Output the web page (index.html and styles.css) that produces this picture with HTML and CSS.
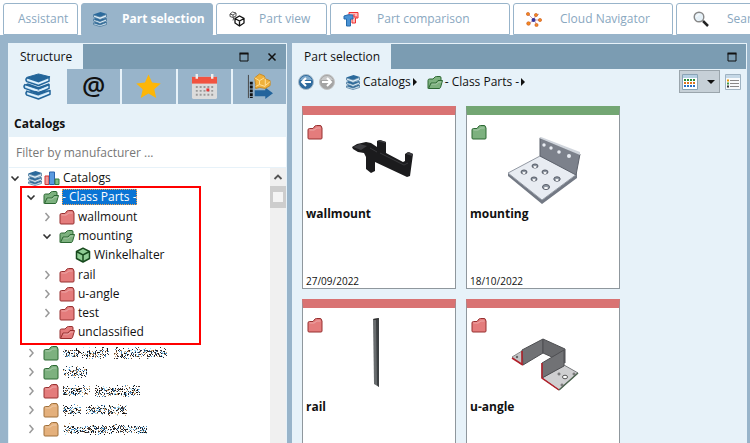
FILE: index.html
```
<!DOCTYPE html>
<html lang="en">
<head>
    <meta charset="UTF-8">
    <meta name="viewport" content="width=device-width, initial-scale=1.0">
    <title>Part selection</title>
    <link rel="stylesheet" href="styles.css">
</head>
<body>

    <!-- Icon library -->
    <svg class="icon-library" width="0" height="0" aria-hidden="true">
        <symbol id="books" viewBox="0 0 32 28">
            <path d="M5 4.500L17 1l12 3-12 5z" fill="#23659a" stroke="#23659a" stroke-linejoin="round"/>
            <path d="M5 5q-2 2 0 4l12 4 11-4.500V4.500L17 9zM3 12q-2 2 0 4l14 5 11-5v-4l-11 4.500zM5 19q-2 2 0 4l12 4 12-5v-4L17 22.500z" fill="#bfe0f5" stroke="#23659a" stroke-width="1.500" stroke-linejoin="round"/>
            <path d="M3 12l3-1.500 11 4 11-4v2L17 17zM5 19l-1-1 13 4.500 11-4.500" fill="#23659a"/>
            <path d="M6 7l11 4 10-4M4 14l13 5 10-4.500M6 21l11 4 11-4.500" fill="none" stroke="#eef8ff"/>
        </symbol>
        <symbol id="books-small" viewBox="0 0 16 16">
            <path d="M1 3.500L8.500 1 15 3 8 6zM1 8l3-1 4 1.500L14 7l1 1-7 3zM1 12l3-1 4 1.500 6-2 1 1-7 3z" fill="#2b6a9c"/>
            <path d="M1.500 4v2L8 8.500 14.500 6V3.500L8 6zM1.500 8.500v1.500L8 12.500 14.500 10V8L8 10.500zM1.500 12v1.500l6.500 2 6.500-2v-2L8 14z" fill="#dcecf6" stroke="#3b6d94" stroke-width=".7"/>
        </symbol>
        <symbol id="folder" viewBox="0 0 16 15">
            <path d="M1 13.500V5.500Q1 4 2.500 4H6l2-2.500Q8.500 1 9.500 1H13q1.500 0 1.500 1.500V3h.5v10.500q0 1-1 1H2q-1 0-1-1z" fill="var(--fill)" stroke="var(--line)"/>
            <path d="M2.500 5.500h5l2-2h4" fill="none" stroke="#fff" stroke-opacity=".35"/>
        </symbol>
        <symbol id="folder-open" viewBox="0 0 16 15">
            <path d="M1 14V6q0-1.500 1.500-1.500H6l2-2q.5-.5 1.500-.5H13q1 0 1 1.500V7" fill="var(--fill)" stroke="var(--line)"/>
            <path d="M1.500 14L4 8.500h5L11 6h4.500L13.500 13q-.5 1-1.500 1z" fill="var(--fill)" stroke="var(--line)" stroke-linejoin="round"/>
            <path d="M4.500 9.500h5l2-2h3" fill="none" stroke="#fff" stroke-opacity=".35"/>
        </symbol>
        <symbol id="chevron-down" viewBox="0 0 10 10"><path d="M1.500 3.500L5 7l3.500-3.500" fill="none" stroke="#333" stroke-width="1.600"/></symbol>
        <symbol id="chevron-right" viewBox="0 0 10 10"><path d="M3.500 1L7 5 3.500 9" fill="none" stroke="#999" stroke-width="1.500"/></symbol>
        <symbol id="chevron-up" viewBox="0 0 10 10"><path d="M1.500 7L5 3.500 8.500 7" fill="none" stroke="#555" stroke-width="1.800"/></symbol>
        <symbol id="maximize" viewBox="0 0 10 10"><path d="M1 1.500h8V9H1z" fill="none" stroke="#111"/><path d="M.5 1.500h9" stroke="#111" stroke-width="2"/></symbol>
        <symbol id="close" viewBox="0 0 10 10"><path d="M1.500 1.500l7 7m0-7l-7 7" stroke="#111" stroke-width="1.500"/></symbol>
    </svg>

    <nav class="main-tabs">
        <button class="tab tab-assistant">Assistant</button>
        <button class="tab tab-selection active"><svg class="icon"><use href="#books-small"/></svg>Part selection</button>
        <button class="tab tab-view">
            <svg class="icon" viewBox="0 0 16 16" fill="none" stroke="#111">
                <path d="M1 3l2.500-2L7 2v3L4 6.500 1 5.500zM1 3l3 1 3-2M4 4v2.500M5 5.500l-1 4" stroke="#555"/>
                <path d="M6 7.500L10.500 5 15 7.500v4.500L10.500 15 6 12zM6 7.500l4.500 2.500L15 7.500M10.500 10v5" stroke-width="1.300"/>
            </svg>Part view
        </button>
        <button class="tab tab-comparison">
            <svg class="icon" viewBox="0 0 16 16">
                <path d="M6 1.500h9V7h-2.500v5H9V7H6z" fill="#fbb" stroke="#e33"/>
                <path d="M1 5q4-2 9-1v4H7.500v7h-4V8H1z" fill="#4a92d4" stroke="#246bac"/>
                <path d="M11 3v3h3" stroke="#e33" fill="none"/>
            </svg>Part comparison
        </button>
        <button class="tab tab-cloud">
            <svg class="icon" viewBox="0 0 16 16">
                <path d="M8 9L2 3m6 6l2-6M8 9h6M8 9l-6 4m6-4l3 5M10 5l3-2" stroke="#c9a0b8" fill="none"/>
                <g fill="#f58a1f" stroke="#c8501a" stroke-width=".6"><circle cx="2" cy="3" r="1.600"/><circle cx="10" cy="4" r="1.600"/><circle cx="14" cy="9" r="1.600"/><circle cx="2.500" cy="12.500" r="1.800"/><circle cx="10.500" cy="14" r="1.600"/></g>
                <circle cx="7.500" cy="9" r="2" fill="#34349c"/>
            </svg>Cloud Navigator
        </button>
        <button class="tab tab-search">
            <svg class="icon" viewBox="0 0 16 16">
                <path d="M10 10l5 5" stroke="#222" stroke-width="2.500"/>
                <circle cx="6" cy="6" r="4.800" fill="#e6f1f8" stroke="#888" stroke-width="1.400"/>
                <path d="M3.500 6q.5-2.500 3-2.500" stroke="#fff" fill="none"/>
            </svg>Search
        </button>
    </nav>

    <main class="workspace">
        <!-- Structure panel -->
        <section class="panel structure">
            <header class="panel-header">
                <h2>Structure</h2>
                <button aria-label="Maximize"><svg><use href="#maximize"/></svg></button>
                <button aria-label="Close"><svg><use href="#close"/></svg></button>
            </header>

            <div class="mode-tabs">
                <button class="active" aria-label="Catalogs"><svg class="mode-icon"><use href="#books"/></svg></button>
                <button class="at" aria-label="Addresses">@</button>
                <button aria-label="Favorites">
                    <svg class="mode-icon" viewBox="0 0 28 28"><path d="M14 1.500l3.700 8.300 9 1-6.700 6 2 9L14 21.300 6 25.800l2-9-6.700-6 9-1z" fill="#fdb608"/></svg>
                </button>
                <button aria-label="History">
                    <svg class="mode-icon" viewBox="0 0 28 28">
                        <rect x="1" y="4" width="26" height="23" rx="1.500" fill="#dcdcdc"/>
                        <path d="M1 4h26v7H1z" fill="#f15340"/>
                        <path d="M6 1v5M22 1v5" stroke="#eee" stroke-width="2.500"/>
                        <path d="M5 14.500h19M5 18.500h19M5 22.500h19" stroke="#9a9a9a" stroke-width="2" stroke-dasharray="2 2"/>
                        <path d="M16 16h3v3h-3z" fill="#e33"/>
                    </svg>
                </button>
                <button aria-label="Sort">
                    <svg class="mode-icon" viewBox="0 0 28 28">
                        <path d="M2.500 2v24" stroke="#444"/>
                        <path d="M5.500 9v17" stroke="#111" stroke-width="3" stroke-dasharray="3 1"/>
                        <path d="M9 18h11v-3l8 6-8 6v-3H9z" fill="#23649c"/>
                        <path d="M9 5l5-4 5 2 1 3 5 2v5l-5 3-6-1-4 1V12z" fill="#efb13c" stroke="#c98a24"/>
                        <path d="M9 5l5 3 5-3m-5 3v4l6 2m-6-2l-4 2m10-8l0 7 5-4" fill="none" stroke="#ffe09a"/>
                    </svg>
                </button>
            </div>

            <h3 class="structure-title">Catalogs</h3>
            <input class="filter" type="text" placeholder="Filter by manufacturer ..." aria-label="Filter by manufacturer">

            <div class="tree-area">
                <ul class="tree">
                    <li>
                        <div class="node">
                            <svg class="arrow"><use href="#chevron-down"/></svg>
                            <svg class="icon"><use href="#books-small"/></svg>
                            <svg class="icon" viewBox="0 0 16 15"><path d="M1 5.500h4V14H1z" fill="#f09a9a" stroke="#c33"/><path d="M5.500 1.500h5V14h-5z" fill="#5b9ae0" stroke="#2b62ac"/><path d="M11 8.500h4V14h-4z" fill="#7fbf86" stroke="#387a40"/></svg>
                            <span class="label">Catalogs</span>
                        </div>
                        <ul>
                            <li class="marked">
                                <div class="node"><svg class="arrow"><use href="#chevron-down"/></svg><svg class="icon green"><use href="#folder-open"/></svg><span class="label selected">- Class Parts -</span></div>
                                <ul>
                                    <li><div class="node"><svg class="arrow"><use href="#chevron-right"/></svg><svg class="icon red"><use href="#folder"/></svg><span class="label">wallmount</span></div></li>
                                    <li>
                                        <div class="node"><svg class="arrow"><use href="#chevron-down"/></svg><svg class="icon green"><use href="#folder-open"/></svg><span class="label">mounting</span></div>
                                        <ul>
                                            <li>
                                                <div class="node leaf">
                                                    <svg class="icon" viewBox="0 0 16 16"><path d="M1.500 4.500L8 1.200l6.500 3.300v7L8 15l-6.500-3.500z" fill="#90cd95" stroke="#17491d" stroke-width="1.500" stroke-linejoin="round"/><path d="M1.500 4.500L8 8l6.500-3.500M8 8v7" fill="none" stroke="#17491d" stroke-width="1.500"/></svg>
                                                    <span class="label">Winkelhalter</span>
                                                </div>
                                            </li>
                                        </ul>
                                    </li>
                                    <li><div class="node"><svg class="arrow"><use href="#chevron-right"/></svg><svg class="icon red"><use href="#folder"/></svg><span class="label">rail</span></div></li>
                                    <li><div class="node"><svg class="arrow"><use href="#chevron-right"/></svg><svg class="icon red"><use href="#folder"/></svg><span class="label">u-angle</span></div></li>
                                    <li><div class="node"><svg class="arrow"><use href="#chevron-right"/></svg><svg class="icon red"><use href="#folder"/></svg><span class="label">test</span></div></li>
                                    <li><div class="node leaf"><svg class="icon red"><use href="#folder-open"/></svg><span class="label">unclassified</span></div></li>
                                </ul>
                            </li>
                            <!-- Names hidden on purpose, the script fills in the speckles -->
                            <li><div class="node"><svg class="arrow"><use href="#chevron-right"/></svg><svg class="icon green"><use href="#folder"/></svg><canvas class="hidden-name" width="104" height="12" data-gap="48"></canvas></div></li>
                            <li><div class="node"><svg class="arrow"><use href="#chevron-right"/></svg><svg class="icon green"><use href="#folder"/></svg><canvas class="hidden-name" width="24" height="12"></canvas></div></li>
                            <li><div class="node"><svg class="arrow"><use href="#chevron-right"/></svg><svg class="icon red"><use href="#folder"/></svg><canvas class="hidden-name" width="77" height="12" data-gap="29"></canvas></div></li>
                            <li><div class="node"><svg class="arrow"><use href="#chevron-right"/></svg><svg class="icon orange"><use href="#folder"/></svg><canvas class="hidden-name" width="64" height="12" data-gap="20"></canvas></div></li>
                            <li><div class="node"><svg class="arrow"><use href="#chevron-right"/></svg><svg class="icon orange"><use href="#folder"/></svg><canvas class="hidden-name" width="84" height="12"></canvas></div></li>
                        </ul>
                    </li>
                </ul>
                <div class="scrollbar">
                    <button aria-label="Scroll up"><svg><use href="#chevron-up"/></svg></button>
                    <div class="thumb"></div>
                </div>
            </div>
        </section>

        <!-- Part selection panel -->
        <section class="panel selection">
            <header class="panel-header">
                <h2>Part selection</h2>
                <button aria-label="Maximize"><svg><use href="#maximize"/></svg></button>
            </header>

            <div class="toolbar">
                <button class="nav-btn" aria-label="Back"><svg class="icon" viewBox="0 0 16 16"><circle cx="8" cy="8" r="7.500" fill="#2d6a9e" stroke="#a9bccb"/><path d="M2 6a6.500 6.500 0 0 1 12 0z" fill="#7fa9cb"/><path d="M13 8H4m4-4L4 8l4 4" fill="none" stroke="#fff" stroke-width="2"/></svg></button>
                <button class="nav-btn" aria-label="Forward"><svg class="icon" viewBox="0 0 16 16"><circle cx="8" cy="8" r="7.500" fill="#a4a4a4" stroke="#c4c4c4"/><path d="M2 6a6.500 6.500 0 0 1 12 0z" fill="#c8c8c8"/><path d="M3 8h9M8 4l4 4-4 4" fill="none" stroke="#fff" stroke-width="2"/></svg></button>
                <a class="crumb" href="#catalogs"><svg class="icon"><use href="#books-small"/></svg>Catalogs<i></i></a>
                <a class="crumb" href="#class-parts"><svg class="icon green"><use href="#folder-open"/></svg>- Class Parts -<i></i></a>
                <button class="view-btn" aria-label="Tile view">
                    <svg class="icon" viewBox="0 0 16 16">
                        <path d="M.5.500h15v15H.5z" fill="#fff" stroke="#8aa3b5"/><path d="M1 1h14v3H1z" fill="#b5cfe2"/>
                        <path d="M2 6h12" stroke="#2a8a3a" stroke-width="2" stroke-dasharray="2 1"/><path d="M2 9h12" stroke="#e0761e" stroke-width="2" stroke-dasharray="2 1"/><path d="M2 12h12" stroke="#2b6fc4" stroke-width="2" stroke-dasharray="2 1"/>
                    </svg>
                    <i></i>
                </button>
                <button class="list-btn" aria-label="List view">
                    <svg class="icon" viewBox="0 0 16 16">
                        <path d="M.5.500h15v15H.5z" fill="#f7fafc" stroke="#9fb3c2"/><path d="M1 1h14v3H1z" fill="#c5d8e6"/>
                        <path d="M5 6.500h9M5 9.500h9M5 12.500h9" stroke="#888"/><path d="M2 6.500h2" stroke="#e90" stroke-width="2"/><path d="M2 9.500h2" stroke="#494" stroke-width="2"/><path d="M2 12.500h2" stroke="#333" stroke-width="2"/>
                    </svg>
                </button>
            </div>

            <div class="card-grid">
                <article class="card red">
                    <svg class="icon"><use href="#folder"/></svg>
                    <svg class="preview" viewBox="0 0 152 90">
                        <path d="M49 31l5-3 9-2 5 1 6 4v-6l3-1 6 2v11l17 9 2-1V38l3-2 5 2-3 22-3 1-32-15v9l-4 2-5-4V41l-2-4-6-1-5-3z" fill="#1b1b1d"/>
                        <path d="M50 31l7-3 7 2-6 4zM74 25l3-1 6 2-1 1zM103 38l3-2 4 2-1 2z" fill="#3c3c40"/>
                        <path d="M77 37l24 12 4-2M67 32l7 4" stroke="#38383b" fill="none"/>
                    </svg>
                    <h4>wallmount</h4>
                    <time>27/09/2022</time>
                </article>
                <article class="card green">
                    <svg class="icon"><use href="#folder"/></svg>
                    <svg class="preview" viewBox="-6 -7 152 90">
                        <path d="M35 50v3l34 28 35-26v-4L69 77z" fill="#737984"/>
                        <path d="M35 50l32-17 37 18-35 26z" fill="#e8ecf2" stroke="#9298a2"/>
                        <path d="M67 15l40 16-4 21-36-19z" fill="#7c818b" stroke="#5d626c"/>
                        <path d="M66 15l2-1 39 15v3z" fill="#d0d5dc"/>
                        <g fill="#e8ecf2"><circle cx="71" cy="22" r="1.700"/><circle cx="78" cy="25" r="1.700"/><circle cx="86" cy="29" r="1.800"/><circle cx="96" cy="33" r="2"/></g>
                        <g fill="#929aa5" stroke="#555b66"><ellipse cx="62" cy="43" rx="3" ry="2"/><ellipse cx="51" cy="49" rx="3" ry="2"/><ellipse cx="72" cy="49" rx="3" ry="2"/><ellipse cx="61" cy="56" rx="3" ry="2"/><ellipse cx="84" cy="56" rx="3.200" ry="2.200"/><ellipse cx="73" cy="64" rx="3.500" ry="2.500"/></g>
                        <g fill="#fff"><ellipse cx="62" cy="44" rx="1.500" ry="1"/><ellipse cx="51" cy="50" rx="1.500" ry="1"/><ellipse cx="72" cy="50" rx="1.500" ry="1"/><ellipse cx="61" cy="57" rx="1.500" ry="1"/><ellipse cx="84" cy="57" rx="1.500" ry="1"/><ellipse cx="73" cy="65" rx="2" ry="1"/></g>
                    </svg>
                    <h4>mounting</h4>
                    <time>18/10/2022</time>
                </article>
                <article class="card red">
                    <svg class="icon"><use href="#folder"/></svg>
                    <svg class="preview" viewBox="0 0 152 90">
                        <path d="M70 10l6-1v69l-5-3z" fill="#686c6e"/>
                        <path d="M73 11l3-2v69l-2-2z" fill="#3c4042"/>
                        <path d="M70 10l6-1-2 2h-3z" fill="#333"/>
                    </svg>
                    <h4>rail</h4>
                </article>
                <article class="card red">
                    <svg class="icon"><use href="#folder"/></svg>
                    <svg class="preview" viewBox="0 0 152 90">
                        <path d="M45 48l10-6v14z" fill="#c4c4c6" stroke="#888"/>
                        <path d="M45 49l11 7" stroke="#b3202a" stroke-width="1.500"/>
                        <path d="M55 41l21-11v14L56 56z" fill="#717275" stroke="#4e4f52"/>
                        <path d="M76 30l22 10v14L76 44z" fill="#68696c" stroke="#4e4f52"/>
                        <path d="M75 69l22-13 14 8-19 17z" fill="#cfcfd1" stroke="#77797c"/>
                        <path d="M75 54l22-13v16L75 69z" fill="#717275" stroke="#4e4f52"/>
                        <path d="M55 42v14M75 54v15l17 12" stroke="#b3202a" stroke-width="1.500" fill="none"/>
                        <path d="M92 81l19-17" stroke="#4f6752" stroke-width="1.500"/>
                        <g fill="#fff" stroke="#555"><circle cx="92" cy="65" r="1"/><ellipse cx="98" cy="68" rx="2.500" ry="1.800"/><circle cx="95" cy="76" r="1"/><circle cx="107" cy="65" r="1"/></g>
                        <circle cx="50" cy="48" r="1.200" fill="#666"/>
                    </svg>
                    <h4>u-angle</h4>
                </article>
            </div>
        </section>
    </main>

    <script>
        const colors = ['#111', '#222a44', '#333', '#5a4030', '#4a90c8', '#a8dcf0', '#c9a070', '#fff'];
        let seed = 7;

        function random() {
            seed = (seed * 16807) % 2147483647;
            return seed / 2147483647;
        }

        // Scatter dots over the names that are not shown
        document.querySelectorAll('.hidden-name').forEach(canvas => {
            const ctx = canvas.getContext('2d');
            const gap = parseInt(canvas.dataset.gap) || -10;
            for (let x = 0; x < canvas.width; x++) {
                if (Math.abs(x - gap) < 3) continue;
                for (let y = 0; y < canvas.height; y++) {
                    const density = y > 2 && y < 10 ? 0.55 : 0.12;
                    if (random() < density) {
                        ctx.fillStyle = colors[Math.floor(random() * colors.length)];
                        ctx.fillRect(x, y, 1, 1);
                    }
                }
            }
        });
    </script>

</body>
</html>
```
FILE: styles.css
```
* {
    box-sizing: border-box;
}

body {
    margin: 0;
    height: 100vh;
    display: flex;
    flex-direction: column;
    overflow: hidden;
    font-family: "Open Sans", "Noto Sans", sans-serif;
    font-size: 12px;
    line-height: 16px;
    color: #111;
    background-color: #98b4ca;
}

button {
    font: inherit;
    color: inherit;
    margin: 0;
    padding: 0;
    border: none;
    background: none;
    cursor: pointer;
}

h2, h3, h4, ul {
    margin: 0;
    padding: 0;
    font-size: 12px;
}

.icon-library {
    position: absolute;
}

.icon {
    display: block;
    flex: none;
    width: 16px;
    height: 16px;
}

.red {
    --fill: #e47c7c;
    --line: #973030;
    --bar: #d97373;
}

.green {
    --fill: #7db17f;
    --line: #2c6833;
    --bar: #73a673;
}

.orange {
    --fill: #e4b07c;
    --line: #a0703a;
}

/* Main tabs */
.main-tabs {
    flex: none;
    display: flex;
    gap: 3px;
    padding: 3px 0 0 3px;
    overflow: hidden;
    background-color: #fff;
}

.tab {
    flex: none;
    display: flex;
    align-items: center;
    gap: 18px;
    height: 32px;
    padding: 0 12px;
    color: #8aa8bf;
    background-color: #fff;
    border: 1px solid #98b4ca;
    border-radius: 3px 3px 0 0;
    white-space: nowrap;
}

.tab.active {
    gap: 14px;
    padding: 0 10px;
    color: #fff;
    font-weight: bold;
    background-color: #98b4ca;
}

.tab-assistant {
    width: 75px;
    padding: 0 14px;
}

.tab-selection {
    width: 132px;
}

.tab-view {
    gap: 14px;
    width: 111px;
}

.tab-comparison {
    width: 180px;
}

.tab-cloud {
    width: 160px;
}

.tab-search {
    width: 160px;
    padding: 0 16px;
}

/* Panels */
.workspace {
    flex: 1;
    min-height: 0;
    display: flex;
    gap: 5px;
    padding: 8px 3px 0 8px;
}

.panel {
    display: flex;
    flex-direction: column;
    min-width: 0;
    overflow: hidden;
    border: 1px solid #e7f2f9;
    border-bottom: none;
    background-color: #e7f2f9;
}

.structure {
    flex: none;
    width: 279px;
}

.selection {
    flex: 1;
}

.panel-header {
    flex: none;
    display: flex;
    align-items: center;
    height: 25px;
    padding-right: 9px;
    gap: 18px;
    background-color: #7b9cb2;
}

.panel-header h2 {
    margin-right: auto;
    padding: 0 11px;
    font-weight: normal;
    line-height: 25px;
    background-color: #e7f2f9;
}

.panel-header svg {
    display: block;
    width: 10px;
    height: 10px;
}

.mode-tabs {
    flex: none;
    display: flex;
    gap: 2px;
    height: 35px;
}

.mode-tabs button {
    flex: 1;
    display: flex;
    align-items: center;
    justify-content: center;
    background-color: #98b4ca;
}

.mode-tabs .active {
    flex: none;
    width: 56px;
    background-color: #e7f2f9;
}

.mode-tabs .at {
    padding-bottom: 4px;
    font-size: 26px;
    font-weight: 600;
}

.mode-icon {
    width: 27px;
    height: 27px;
}

.mode-tabs .active .mode-icon {
    width: 31px;
}

.structure-title {
    padding: 12px 5px 5px;
}

.filter {
    height: 31px;
    padding: 0 7px;
    font: inherit;
    border: none;
    border-bottom: 1px solid #e7f2f9;
    background-color: #fff;
}

.filter::placeholder {
    color: #777;
    opacity: 1;
}

/* Catalog tree */
.tree-area {
    flex: 1;
    min-height: 0;
    display: flex;
    background-color: #fff;
}

.tree {
    flex: 1;
}

.tree ul {
    padding: 0 0 1px 16px;
}

.tree li {
    list-style: none;
}

.marked > ul {
    padding-top: 1px;
    padding-bottom: 2px;
}

.node {
    display: flex;
    align-items: center;
    gap: 1px;
    height: 19px;
    padding-left: 1px;
}

.node.leaf {
    padding-left: 18px;
}

.arrow {
    flex: none;
    width: 10px;
    height: 10px;
    margin-right: 6px;
}

.label {
    margin-left: 2px;
}

.label.selected {
    color: #fff;
    background-color: #0a74d4;
    outline: 1px dotted #f0a050;
    outline-offset: -1px;
}

.hidden-name {
    margin-left: 3px;
}

/* Frame around the class parts branch */
.marked {
    position: relative;
}

.marked::after {
    content: "";
    position: absolute;
    top: -1px;
    bottom: -2px;
    left: -5px;
    width: 177px;
    border: 2px solid #f00;
    pointer-events: none;
}

.scrollbar {
    flex: none;
    width: 16px;
    background-color: #f0f0f0;
}

.scrollbar button {
    display: flex;
    align-items: center;
    justify-content: center;
    width: 100%;
    height: 18px;
}

.scrollbar svg {
    width: 10px;
    height: 10px;
}

.thumb {
    height: 22px;
    border: 6px solid #cdcdcd;
    border-width: 6px 3px;
    background-color: #f4f4f4;
}

/* Toolbar of the part selection */
.toolbar {
    flex: none;
    display: flex;
    align-items: center;
    height: 25px;
    padding: 0 5px;
    gap: 5px;
}

.crumb {
    display: flex;
    align-items: center;
    gap: 2px;
    margin-left: 5px;
    color: inherit;
    text-decoration: none;
    white-space: nowrap;
}

.crumb i {
    border: 4px solid transparent;
    border-left-color: #111;
    border-right: none;
}

.view-btn {
    display: flex;
    align-items: center;
    gap: 9px;
    height: 23px;
    margin-left: auto;
    padding: 0 4px 0 2px;
    border: 1px solid #9aa5ac;
    background-color: #c6d0d7;
}

.view-btn i {
    border: 4px solid transparent;
    border-top-color: #111;
    border-bottom: none;
}

/* Part cards */
.card-grid {
    display: grid;
    grid-template-columns: repeat(auto-fill, 154px);
    gap: 10px;
    padding: 12px 9px;
}

.card {
    display: flex;
    flex-direction: column;
    min-height: 183px;
    border: 1px solid #8f979d;
    border-top: 9px solid var(--bar);
    background-color: #fff;
}

.card .icon {
    margin: 9px 0 0 4px;
}

.preview {
    display: block;
    height: 90px;
    margin-top: -24px;
}

.card h4, .card time {
    padding: 0 3px;
}

.card time {
    margin-top: auto;
    font-size: 10px;
    line-height: 14px;
}
```
